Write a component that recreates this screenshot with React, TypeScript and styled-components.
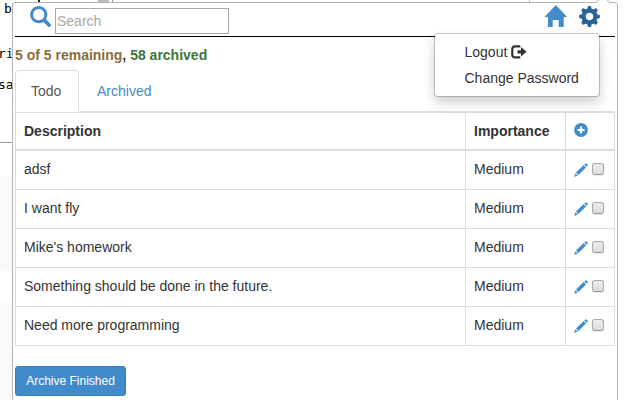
import React from "react";
import styled, { createGlobalStyle } from "styled-components";

const GlobalStyle = createGlobalStyle`
  * { box-sizing: border-box; }
  body {
    margin: 0;
    background: #fff;
    color: #333;
    font: 14px/20px "Liberation Sans", Arial, sans-serif;
    overflow: hidden;
  }
`;

const blue = "#428bca";
const line = "#ddd";

const Screen = styled.div`
  width: 640px;
  height: 400px;
  display: grid;
  grid-template-columns: 12px 606px 22px;
  grid-template-rows: 2px 398px;
  overflow: hidden;
`;

const TopStrip = styled.div`
  grid-column: 1 / -1;
  display: flex;
  overflow: hidden;
`;

const StripMark = styled.span<{ $gap: number; $width: number; $color: string }>`
  flex: none;
  margin-left: ${(p) => p.$gap}px;
  width: ${(p) => p.$width}px;
  height: 2px;
  background: ${(p) => p.$color};
`;

const Behind = styled.div`
  overflow: hidden;
  display: flex;
  flex-direction: column;
  color: #000;
  font: 13px/15px "DejaVu Sans Mono", monospace;
  white-space: pre;
`;

const CodeLine = styled.div<{ $height: number; $indent: number; $leading?: number }>`
  flex: none;
  height: ${(p) => p.$height}px;
  line-height: ${(p) => p.$leading ?? 15}px;
  margin-left: ${(p) => p.$indent}px;
`;

const Band = styled.div<{ $height: number; $fill: string; $ruled?: boolean }>`
  flex: none;
  height: ${(p) => p.$height}px;
  background: ${(p) => p.$fill};
  border-top: ${(p) => (p.$ruled ? "1px solid #999" : "0")};
`;

const Popup = styled.main`
  position: relative;
  height: 420px;
  border: 1px solid #b4b4b4;
  border-radius: 3px;
  background: #fff;
  padding: 0 2px;
`;

const Pointer = styled.svg`
  position: absolute;
  left: 583px;
  top: -4px;
`;

const Toolbar = styled.header`
  height: 34px;
  border-bottom: 1px solid #000;
  display: flex;
  align-items: flex-start;
  padding: 3px 14px 0 15px;
`;

const SearchInput = styled.input`
  width: 174px;
  height: 26px;
  margin: 2px auto 0 4px;
  padding: 1px;
  border: 1px solid #a9a9a9;
  border-radius: 0;
  background: #fff;
  color: #333;
  font: 14px "Liberation Sans", Arial, sans-serif;
  &::placeholder { color: #a9a9a9; opacity: 1; }
`;

const ToolIcons = styled.nav`
  display: flex;
  gap: 12px;
  margin-top: -1px;
`;

const Status = styled.p`
  margin: 8px 0 5px;
  font-weight: bold;
`;

const Tone = styled.span<{ $color: string }>`
  color: ${(p) => p.$color};
`;

const Tabs = styled.div`
  height: 42px;
  display: flex;
  gap: 2px;
  border-bottom: 1px solid ${line};
`;

const Tab = styled.button<{ $active?: boolean }>`
  height: 42px;
  padding: 0 15px;
  border: 1px solid ${(p) => (p.$active ? line : "transparent")};
  border-bottom-color: ${(p) => (p.$active ? "#fff" : "transparent")};
  border-radius: 4px 4px 0 0;
  background: ${(p) => (p.$active ? "#fff" : "transparent")};
  color: ${(p) => (p.$active ? "#555" : blue)};
  font: inherit;
  text-align: left;
  &:first-child { width: 64px; }
`;

const Table = styled.table`
  width: 600px;
  margin-bottom: 20px;
  table-layout: fixed;
  border-collapse: separate;
  border-spacing: 0;
  border: 1px solid ${line};
  border-width: 0 0 0 1px;
`;

const HeadCell = styled.th`
  height: 39px;
  padding: 0 8px;
  text-align: left;
  border: solid ${line};
  border-width: 1px 1px 2px 0;
`;

const Cell = styled.td`
  height: 39px;
  padding: 0 8px 2px;
  border: solid ${line};
  border-width: 0 1px 1px 0;
`;

const Actions = styled.div`
  display: flex;
  align-items: flex-start;
  gap: 4px;
  height: 14px;
  margin-top: 2px;
`;

const Check = styled.input.attrs({ type: "checkbox" })`
  appearance: none;
  width: 12px;
  height: 12px;
  margin: 0;
  border: 1px solid #aaa;
  border-bottom-color: #999;
  border-radius: 3px;
  background: linear-gradient(#ededed, #dcdcdc);
  box-shadow: 0 1px 1px rgba(0, 0, 0, 0.08);
`;

const ArchiveButton = styled.button`
  display: block;
  width: 111px;
  height: 30px;
  padding: 0;
  border: 1px solid #357ebd;
  border-radius: 3px;
  background: ${blue};
  color: #fff;
  font: 12px/18px "Liberation Sans", Arial, sans-serif;
`;

const Menu = styled.div`
  position: absolute;
  left: 421px;
  top: 30px;
  width: 166px;
  height: 64px;
  padding: 5px 0;
  border: 1px solid rgba(0, 0, 0, 0.2);
  border-radius: 4px;
  background: #fff;
  background-clip: padding-box;
  box-shadow: 0 6px 12px rgba(0, 0, 0, 0.175);
`;

const MenuItem = styled.div`
  height: 26px;
  padding-left: 29.500px;
  display: flex;
  align-items: center;
  gap: 4px;
`;

const PlusMark = styled.svg`
  display: block;
  margin-bottom: 2px;
`;

const SearchIcon = () => (
  <svg width="21" height="21" viewBox="0 0 1200 1200" fill={blue}>
    <path
      transform="translate(0 1195) scale(1 -1)"
      d="M500 1191q100 0 191-39t156.500-104.500t104.500-156.500t39-191l-1-2l1-5q0-141-78-262l275-274q23-26 22.500-44.500t-22.500-42.500l-59-58q-26-20-46.500-20t-39.500 20l-275 274q-119-77-261-77l-5 1l-2-1q-100 0-191 39t-156.500 104.500t-104.500 156.500t-39 191t39 191t104.500 156.500t156.500 104.500t191 39zM500 1022q-88 0-162-43t-117-117t-43-162t43-162t117-117t162-43t162 43t117 117t43 162t-43 162t-117 117t-162 43z"
    />
  </svg>
);

const HomeIcon = () => (
  <svg width="23" height="22" viewBox="0 0 23 22" fill={blue}>
    <path d="M11.800 0L22.700 11.500Q22.900 12 22.200 12H19.700V21.500Q19.700 22 19.200 22H14.700V15H8.700V22H4.400Q4 22 4 21.500V12H1.300Q.6 12 .9 11.500Z" />
  </svg>
);

const teeth = [0, 45, 90, 135, 180, 225, 270, 315];

const CogIcon = () => (
  <svg width="22" height="22" viewBox="-10.500 -11.500 22 22" fill="#2a6496">
    {teeth.map((a) => (
      <path key={a} transform={`rotate(${a})`} d="M-2.400-7L-1.600-10Q-1.500-10.400-1.100-10.400H1.100Q1.500-10.400 1.600-10L2.400-7Z" />
    ))}
    <circle r="5.900" fill="none" stroke="#2a6496" strokeWidth="4.200" />
  </svg>
);

const PlusIcon = () => (
  <PlusMark width="14" height="14" viewBox="0 0 14 14">
    <circle cx="7" cy="7" r="6.900" fill={blue} />
    <path d="M7 3.500V10.500M3.500 7H10.500" stroke="#fff" strokeWidth="2.200" />
  </PlusMark>
);

const PencilIcon = () => (
  <svg width="14" height="14" viewBox="0 0 14 14" fill={blue}>
    <path d="M11.300.4Q11.800-.1 12.300.4L13.700 1.700Q14.200 2.300 13.600 2.800L12.600 3.800L10.300 1.400ZM9.700 2L12 4.400L4.400 11.900L2 9.500ZM1.500 10.200L3.800 12.500L0 14Z" />
  </svg>
);

const LogoutIcon = () => (
  <svg width="16" height="14" viewBox="0 0 16 14" fill="#333">
    <path d="M9.300 1.300H4Q1.300 1.300 1.300 4V9.700Q1.300 12.400 4 12.400H9.300" fill="none" stroke="#333" strokeWidth="2.200" />
    <path d="M6.500 5.200H10V2L15.500 6.800L10 11.500V8.500H6.500Z" />
  </svg>
);

const todos = [
  "adsf",
  "I want fly",
  "Mike's homework",
  "Something should be done in the future.",
  "Need more programming",
];

export default function App() {
  return (
    <>
      <GlobalStyle />
      <Screen>
        <TopStrip>
          <StripMark $gap={38} $width={2} $color="#222" />
          <StripMark $gap={58} $width={11} $color="#bbb" />
          <StripMark $gap={3} $width={1} $color="#999" />
          <StripMark $gap={416} $width={1} $color="#bbb" />
        </TopStrip>
        <Behind>
          <CodeLine $height={44} $indent={4} $leading={13}>b</CodeLine>
          <CodeLine $height={31} $indent={-2}>ri</CodeLine>
          <CodeLine $height={65} $indent={-2}>sa</CodeLine>
          <Band $height={34} $fill="#fff" $ruled />
          <Band $height={95} $fill="#f9f9f9" />
          <Band $height={32} $fill="#fff" />
          <Band $height={97} $fill="#f9f9f9" />
        </Behind>
        <Popup>
          <Pointer width="16" height="5" viewBox="0 0 16 5">
            <path d="M0 4L4 0H10L14 4V5H0Z" fill="#fff" />
            <path d="M0 3.500L4 0M10 0L14 3.500" stroke="#b4b4b4" fill="none" />
          </Pointer>
          <Toolbar>
            <SearchIcon />
            <SearchInput placeholder="Search" aria-label="Search" />
            <ToolIcons>
              <HomeIcon />
              <CogIcon />
            </ToolIcons>
          </Toolbar>
          <Status>
            <Tone $color="#8a6d3b">5 of 5 remaining</Tone>,{" "}
            <Tone $color="#3c763d">58 archived</Tone>
          </Status>
          <Tabs>
            <Tab $active>Todo</Tab>
            <Tab>Archived</Tab>
          </Tabs>
          <Table>
            <colgroup>
              <col width="450" />
              <col width="100" />
              <col width="49" />
            </colgroup>
            <thead>
              <tr>
                <HeadCell>Description</HeadCell>
                <HeadCell>Importance</HeadCell>
                <HeadCell><PlusIcon /></HeadCell>
              </tr>
            </thead>
            <tbody>
              {todos.map((todo) => (
                <tr key={todo}>
                  <Cell>{todo}</Cell>
                  <Cell>Medium</Cell>
                  <Cell>
                    <Actions>
                      <PencilIcon />
                      <Check aria-label={todo} />
                    </Actions>
                  </Cell>
                </tr>
              ))}
            </tbody>
          </Table>
          <ArchiveButton>Archive Finished</ArchiveButton>
          <Menu>
            <MenuItem>Logout <LogoutIcon /></MenuItem>
            <MenuItem>Change Password</MenuItem>
          </Menu>
        </Popup>
      </Screen>
    </>
  );
}
